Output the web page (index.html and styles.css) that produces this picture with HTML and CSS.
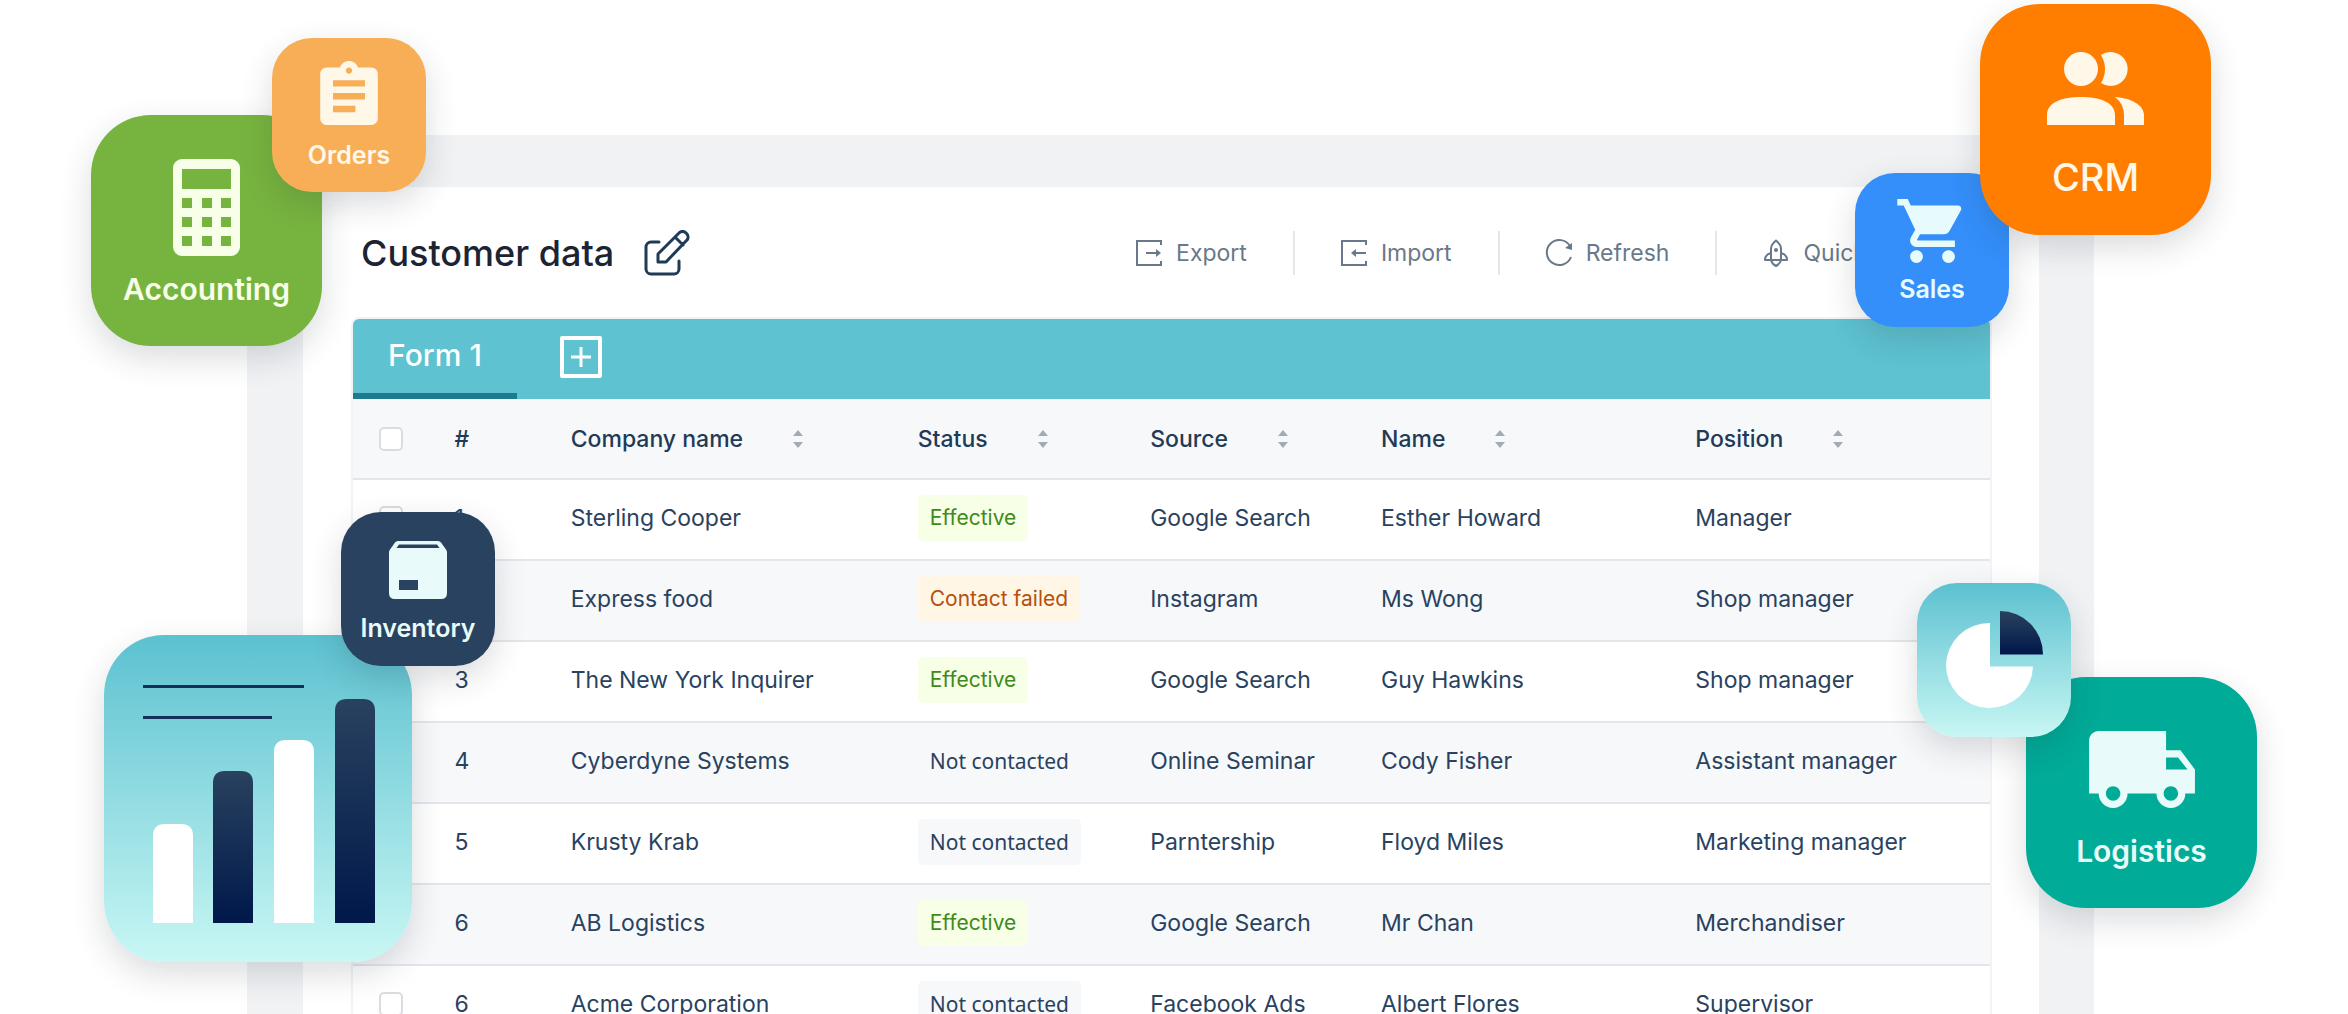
FILE: index.html
```html
<!DOCTYPE html>
<html lang="en">
<head>
<meta charset="utf-8">
<title>Customer data</title>
<link rel="stylesheet" href="styles.css">
</head>
<body>
<main class="hero">
  <section class="frame">
    <header class="header">
      <h1 class="title">Customer data</h1>
      <button class="edit" type="button" aria-label="Edit">
        <svg width="46" height="46" viewBox="0 0 46 46" fill="none" stroke="#1f3b57" stroke-width="3" stroke-linecap="round" stroke-linejoin="round"><path d="M15 12H7a5 5 0 0 0-5 5v22a5 5 0 0 0 5 5h23a5 5 0 0 0 5-5v-8"/><path d="M14 32v-8L35 3a4.600 4.600 0 0 1 7 0l.5.5a4.600 4.600 0 0 1 0 7L22 32zM31 7l8 8"/></svg>
      </button>
      <nav class="toolbar">
        <button class="tool" type="button">
          <svg width="28" height="28" viewBox="0 0 28 28" fill="none" stroke="currentColor" stroke-width="2"><path d="M26 6V2H2v24h24v-4M11 14h13"/><path d="M21 10l5 4-5 4z" fill="currentColor" stroke="none"/></svg>Export</button>
        <button class="tool" type="button">
          <svg width="28" height="28" viewBox="0 0 28 28" fill="none" stroke="currentColor" stroke-width="2"><path d="M26 6V2H2v24h24v-4M13 14h13"/><path d="M16 10l-5 4 5 4z" fill="currentColor" stroke="none"/></svg>Import</button>
        <button class="tool" type="button">
          <svg width="28" height="28" viewBox="0 0 28 28" fill="none" stroke="currentColor" stroke-width="2"><path d="M25 7A12.500 12.500 0 1 0 26 18"/><path d="M27 4v7l-7-2z" fill="currentColor" stroke="none"/></svg>Refresh</button>
        <button class="tool" type="button">
          <svg width="28" height="28" viewBox="0 0 28 28" fill="none" stroke="currentColor" stroke-width="2" stroke-linejoin="round"><path d="M14 1.500c3 2.500 5 5 5 8V21q-1 4-5 6-4-2-5-6V9.500c0-3 2-5.500 5-8zM9 14c-4 1-6 4-6 7h22c0-3-2-6-6-7"/><circle cx="14" cy="11" r="1"/></svg>Quick</button>
      </nav>
    </header>
    <div class="panel">
      <div class="tabs">
        <button class="tab" type="button">Form 1</button>
        <button class="add" type="button" aria-label="Add form">
          <svg width="42" height="42" viewBox="0 0 42 42" fill="none" stroke="#fff" stroke-width="4"><path d="M2 2h38v38H2z" stroke-linejoin="round"/><path d="M21 11v20M11 21h20" stroke-width="3"/></svg>
        </button>
      </div>
      <table class="grid">
        <thead>
          <tr>
            <th class="col-check"><input type="checkbox" aria-label="Select all"></th>
            <th class="col-num">#</th>
            <th class="col-company"><span class="sort">Company name<svg width="10" height="18" viewBox="0 0 10 18" fill="#a3abb6"><path d="M5 0l5 6H0zM5 18l5-6H0z"/></svg></span></th>
            <th class="col-status"><span class="sort">Status<svg width="10" height="18" viewBox="0 0 10 18" fill="#a3abb6"><path d="M5 0l5 6H0zM5 18l5-6H0z"/></svg></span></th>
            <th class="col-source"><span class="sort">Source<svg width="10" height="18" viewBox="0 0 10 18" fill="#a3abb6"><path d="M5 0l5 6H0zM5 18l5-6H0z"/></svg></span></th>
            <th class="col-name"><span class="sort">Name<svg width="10" height="18" viewBox="0 0 10 18" fill="#a3abb6"><path d="M5 0l5 6H0zM5 18l5-6H0z"/></svg></span></th>
            <th><span class="sort">Position<svg width="10" height="18" viewBox="0 0 10 18" fill="#a3abb6"><path d="M5 0l5 6H0zM5 18l5-6H0z"/></svg></span></th>
          </tr>
        </thead>
        <tbody>
          <tr><td class="col-check"><input type="checkbox" aria-label="Select Sterling Cooper"></td><td>1</td><td>Sterling Cooper</td><td><span class="badge good">Effective</span></td><td>Google Search</td><td>Esther Howard</td><td>Manager</td></tr>
          <tr><td class="col-check"><input type="checkbox" aria-label="Select Express food"></td><td>2</td><td>Express food</td><td><span class="badge bad">Contact failed</span></td><td>Instagram</td><td>Ms Wong</td><td>Shop manager</td></tr>
          <tr><td class="col-check"><input type="checkbox" aria-label="Select The New York Inquirer"></td><td>3</td><td>The New York Inquirer</td><td><span class="badge good">Effective</span></td><td>Google Search</td><td>Guy Hawkins</td><td>Shop manager</td></tr>
          <tr><td class="col-check"><input type="checkbox" aria-label="Select Cyberdyne Systems"></td><td>4</td><td>Cyberdyne Systems</td><td><span class="badge none">Not contacted</span></td><td>Online Seminar</td><td>Cody Fisher</td><td>Assistant manager</td></tr>
          <tr><td class="col-check"><input type="checkbox" aria-label="Select Krusty Krab"></td><td>5</td><td>Krusty Krab</td><td><span class="badge none">Not contacted</span></td><td>Parntership</td><td>Floyd Miles</td><td>Marketing manager</td></tr>
          <tr><td class="col-check"><input type="checkbox" aria-label="Select AB Logistics"></td><td>6</td><td>AB Logistics</td><td><span class="badge good">Effective</span></td><td>Google Search</td><td>Mr Chan</td><td>Merchandiser</td></tr>
          <tr><td class="col-check"><input type="checkbox" aria-label="Select Acme Corporation"></td><td>6</td><td>Acme Corporation</td><td><span class="badge none">Not contacted</span></td><td>Facebook Ads</td><td>Albert Flores</td><td>Supervisor</td></tr>
        </tbody>
      </table>
    </div>
  </section>

  <div class="tile large accounting">
    <svg width="67" height="97" viewBox="0 0 67 97" fill="#f8ffe8"><path fill-rule="evenodd" d="M9 0h49a9 9 0 0 1 9 9v79a9 9 0 0 1-9 9H9a9 9 0 0 1-9-9V9a9 9 0 0 1 9-9zM9 10v20h49V10zM9 39v10h10V39zM29 39v10h10V39zM48 39v10h10V39zM9 58v10h10V58zM29 58v10h10V58zM48 58v10h10V58zM9 77v10h10V77zM29 77v10h10V77zM48 77v10h10V77z"/></svg>
    <span>Accounting</span>
  </div>
  <div class="tile small orders">
    <svg width="58" height="64" viewBox="3 1 18 20" fill="#fff7e8"><path d="M19 3h-4.180C14.400 1.840 13.300 1 12 1c-1.300 0-2.400.84-2.820 2H5c-1.100 0-2 .9-2 2v14c0 1.100.9 2 2 2h14c1.100 0 2-.9 2-2V5c0-1.100-.9-2-2-2zm-7 0c.55 0 1 .45 1 1s-.45 1-1 1-1-.45-1-1 .45-1 1-1zm2 14H7v-2h7v2zm3-4H7v-2h10v2zm0-4H7V7h10v2z"/></svg>
    <span>Orders</span>
  </div>
  <div class="tile small sales">
    <svg width="77" height="64" viewBox="0 2 24 20" fill="#e8fbfc"><path d="M7 18c-1.100 0-1.990.9-1.990 2S5.900 22 7 22s2-.9 2-2-.9-2-2-2zM1 2v2h2l3.600 7.590-1.350 2.450c-.16.28-.25.61-.25.96 0 1.100.9 2 2 2h12v-2H7.420c-.14 0-.25-.11-.25-.25l.03-.12.9-1.630h7.450c.75 0 1.410-.41 1.750-1.030l3.580-6.490c.08-.14.12-.31.12-.48 0-.55-.45-1-1-1H5.210l-.94-2H1zm16 16c-1.100 0-1.990.9-1.990 2s.89 2 1.990 2 2-.9 2-2-.9-2-2-2z"/></svg>
    <span>Sales</span>
  </div>
  <div class="tile large crm">
    <svg width="97" height="73" viewBox="0 0 97 73" fill="#fff7e8"><circle cx="34" cy="17" r="17"/><path d="M54 3a17 17 0 1 1 0 28q8-14 0-28zM0 73V63C0 50 16 45 34 45s34 5 34 18v10zM68 45c16 1 29 8 29 18v10H77V63q0-11-9-18z"/></svg>
    <span>CRM</span>
  </div>
  <div class="tile chart">
    <svg width="308" height="327" viewBox="0 0 308 327">
      <defs><linearGradient id="navy" x1="0" y1="0" x2="0" y2="1"><stop offset="0" stop-color="#29425f"/><stop offset="1" stop-color="#00184a"/></linearGradient></defs>
      <path d="M39 51.500h161M39 82.500h129" stroke="#12305a" stroke-width="3"/>
      <path d="M49 288v-87q0-12 12-12h16q12 0 12 12v87zM170 288V117q0-12 12-12h16q12 0 12 12v171z" fill="#fff"/>
      <path d="M109 288V148q0-12 12-12h16q12 0 12 12v140z" fill="url(#navy)"/>
      <path d="M231 288V76q0-12 12-12h16q12 0 12 12v212z" fill="url(#navy)"/>
    </svg>
  </div>
  <div class="tile small inventory">
    <svg width="58" height="58" viewBox="0 0 58 58" fill="#e8fbfa"><path fill-rule="evenodd" d="M9 0h40q2 0 3 1.500l5 7q1 1.500 1 3V52q0 6-6 6H6q-6 0-6-6V11.500q0-1.500 1-3l5-7Q7 0 9 0zM10 3.500L7.500 7h43L48 3.500zM10 39v10h19V39z"/></svg>
    <span>Inventory</span>
  </div>
  <div class="tile large logistics">
    <svg width="106" height="77" viewBox="1 4 22 16" fill="#e8fbfa"><path d="M20 8h-3V4H3c-1.100 0-2 .9-2 2v11h2c0 1.660 1.340 3 3 3s3-1.340 3-3h6c0 1.660 1.340 3 3 3s3-1.340 3-3h2v-5l-3-4zM6 18.500c-.83 0-1.500-.67-1.500-1.500s.67-1.500 1.500-1.500 1.500.67 1.500 1.500-.67 1.500-1.500 1.500zm13.500-9l1.960 2.500H17V9.500h2.500zm-1.500 9c-.83 0-1.500-.67-1.500-1.500s.67-1.500 1.500-1.500 1.500.67 1.500 1.500-.67 1.500-1.500 1.500z"/></svg>
    <span>Logistics</span>
  </div>
  <div class="tile small pie">
    <svg width="98" height="98" viewBox="0 0 98 98"><path d="M45 12v43.500h43A43.500 42.500 0 1 1 45 12z" fill="#fff"/><path d="M55 0a43 43.500 0 0 1 43 43.500H55z" fill="url(#navy)"/></svg>
  </div>
</main>
</body>
</html>
```
FILE: styles.css
```css
* { box-sizing: border-box; }

body {
  margin: 0;
  background: #fff;
  color: #29425f;
  font-family: Inter, "Liberation Sans", sans-serif;
  font-size: 23px;
  line-height: 30px;
}

button {
  padding: 0;
  border: 0;
  background: none;
  color: inherit;
  font: inherit;
}

svg { display: block; flex: none; }

.hero {
  position: relative;
  height: 100vh;
  padding: 135px 254px 0 247px;
  overflow: hidden;
}

/* Application window */
.frame {
  padding: 0 49px 0 50px;
  border: solid #f0f2f4;
  border-width: 52px 55px 0 56px;
  background: #fff;
}

.header {
  display: flex;
  align-items: center;
  height: 132px;
  padding-left: 8px;
}

.title {
  margin: 0;
  color: #1c2433;
  font-size: 36px;
  font-weight: 500;
  line-height: 44px;
}

.edit { margin-left: 30px; }

.toolbar {
  display: flex;
  margin-left: auto;
  padding-right: 124px;
}

.tool {
  display: flex;
  align-items: center;
  gap: 13px;
  height: 44px;
  color: #69788a;
}

.tool + .tool {
  margin-left: 46px;
  padding-left: 45px;
  border-left: 2px solid #e3e6ea;
}

.panel {
  border-radius: 6px 6px 0 0;
  box-shadow: 0 0 0 2px #f1f3f5;
}

.tabs {
  display: flex;
  align-items: center;
  gap: 43px;
  height: 80px;
  border-radius: 6px 6px 0 0;
  background: #5ec2d0;
  overflow: hidden;
}

.tab {
  align-self: stretch;
  width: 164px;
  padding-bottom: 2px;
  border-bottom: 6px solid #1e7b8f;
  color: #fff;
  font-size: 30px;
  font-weight: 500;
}

.add { padding-bottom: 4px; }

/* Data table */
.grid {
  width: 100%;
  border-spacing: 0;
  table-layout: fixed;
}

.grid th,
.grid td {
  height: 81px;
  padding: 0 0 3px;
  border-bottom: 2px solid #e3e6ea;
  text-align: left;
  white-space: nowrap;
}

.grid th {
  padding: 0;
  background: #f7f8fa;
  color: #1f3b57;
  font-weight: 500;
}

.grid tbody tr:nth-child(even) { background: #f7f8fa; }

.grid .col-check { width: 6.2%; padding-left: 26px; }
.col-num { width: 7.1%; }
.col-company { width: 21.2%; }
.col-status { width: 14.2%; }
.col-source { width: 14.1%; }
.col-name { width: 19.2%; }

.grid input {
  appearance: none;
  display: block;
  width: 24px;
  height: 24px;
  margin: 0;
  border: 2px solid #d9dde2;
  border-radius: 5px;
  background: #fff;
}

.sort {
  display: flex;
  align-items: center;
  gap: 50px;
}

.badge {
  display: inline-block;
  padding: 8px 12px;
  border-radius: 5px;
  font-size: 21px;
  vertical-align: middle;
}

.good { background: #f7ffe6; color: #3f8a1b; }
.bad { background: #fff6e6; color: #b5500f; }
.none {
  background: #f7f8fa;
  font-family: "Noto Sans", sans-serif;
}

/* Floating app tiles */
.tile {
  position: absolute;
  display: flex;
  flex-direction: column;
  align-items: center;
  box-shadow: 0 12px 32px rgba(30, 35, 50, 0.16);
  font-weight: 600;
}

.large {
  width: 231px;
  height: 231px;
  border-radius: 60px;
  font-size: 30px;
  line-height: 36px;
}

.small {
  width: 154px;
  height: 154px;
  border-radius: 40px;
  font-size: 25px;
}

.accounting { left: 91px; top: 115px; padding-top: 44px; gap: 15px; background: #77b43f; color: #f8ffe8; }
.orders { left: 272px; top: 38px; padding-top: 23px; gap: 15px; background: #f7ae56; color: #fff7e8; }
.sales { right: 339px; top: 173px; padding-top: 26px; gap: 11px; background: #348ffa; color: #e8fbfc; }
.crm { right: 137px; top: 4px; padding-top: 48px; gap: 34px; background: #ff7e00; color: #fff7e8; font-size: 38px; font-weight: 500; }
.chart { left: 104px; top: 635px; border-radius: 60px; background: linear-gradient(#5cc1d0, #c8f7f4); }
.inventory { left: 341px; top: 512px; padding-top: 29px; gap: 14px; background: #29425f; color: #e8fbfa; }
.logistics { right: 91px; top: 677px; padding-top: 54px; gap: 25px; background: #00ab98; color: #e8fbfa; }
.pie { right: 277px; top: 583px; padding-top: 28px; background: linear-gradient(#5cc1d0, #c8f7f4); }
```
